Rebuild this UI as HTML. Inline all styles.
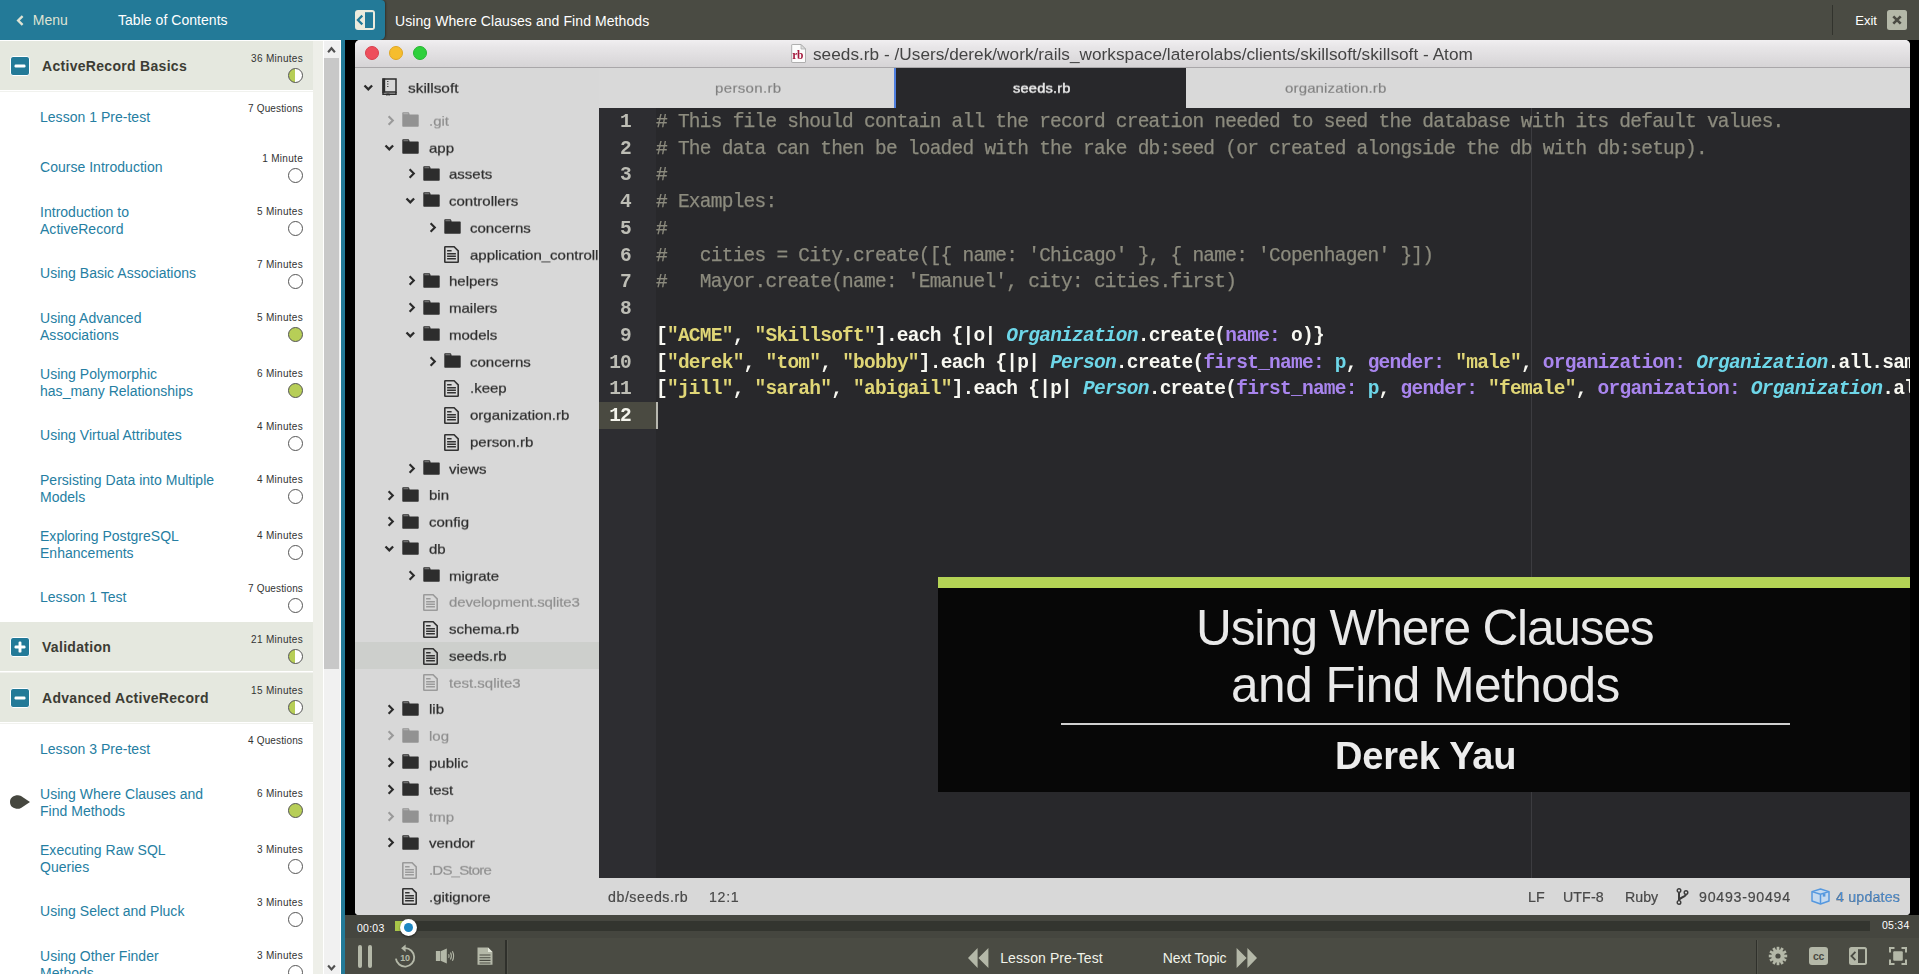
<!DOCTYPE html>
<html><head><meta charset="utf-8"><title>Using Where Clauses and Find Methods</title>
<style>
html,body{margin:0;padding:0;overflow:hidden;}
body{width:1919px;height:974px;overflow:hidden;position:relative;background:#4a4b43;font-family:"Liberation Sans",sans-serif;}
div,svg{box-sizing:border-box;}
.abs{position:absolute;}
.it{position:absolute;left:40px;width:200px;font:14px/17px "Liberation Sans",sans-serif;color:#257ea2;letter-spacing:0.02px;}
.mn{position:absolute;right:1616px;font:10px/12px "Liberation Sans",sans-serif;color:#333;letter-spacing:0.3px;white-space:nowrap;}
.ci{position:absolute;left:288px;width:15px;height:15px;border-radius:50%;border:1px solid #555;background:#fff;}
.ci.g{background:#b7ce57;}
.ci.h{background:linear-gradient(90deg,#b7ce57 0,#b7ce57 50%,#fff 50%,#fff 100%);}
.sec{position:absolute;left:0;width:313px;background:#e5e8df;}
.sect{position:absolute;left:42px;font:bold 14px/16px "Liberation Sans",sans-serif;color:#3c3c34;letter-spacing:0.3px;white-space:nowrap;}
.tv,.code,.ln,.sb,.gs{will-change:transform;}
.tv{transform:scaleY(0.89);transform-origin:50% 62%;}
.tv{position:absolute;font:15px/18px "Liberation Sans",sans-serif;color:#2e2e2e;white-space:nowrap;-webkit-text-stroke:0.25px #2e2e2e;}
.tv.dim{color:#8e8e8e;-webkit-text-stroke:0.2px #8e8e8e;}
.code{position:absolute;font:19.5px/20px "Liberation Mono",monospace;letter-spacing:-0.755px;white-space:pre;color:#f8f8f2;}
.ln{position:absolute;font:bold 19.5px/20px "Liberation Mono",monospace;letter-spacing:-0.78px;white-space:pre;color:#bdbdb5;text-align:right;width:40px;left:-8px;}
.c{color:#8c8b7e;-webkit-text-stroke:0.25px #8c8b7e;} .s{color:#e0d676;} .k{color:#a985ee;} .t{color:#6dd6e8;font-style:italic;} .p{color:#6dd6e8;}
.sb{position:absolute;font:14.2px/18px "Liberation Sans",sans-serif;color:#444;white-space:nowrap;-webkit-text-stroke:0.2px #444;}
</style></head><body>

<div class="abs" style="left:0;top:0;width:1919px;height:40px;background:#4a4b43;"></div>
<div class="abs" style="left:0;top:0;width:385px;height:40px;background:#237a98;border-radius:0 4px 5px 0;box-shadow:1px 0 2px rgba(0,0,0,0.35);"></div>
<svg class="abs" style="left:14px;top:12px" width="14" height="16" viewBox="0 0 14 16"><polyline points="8.6,4.2 4.2,8.5 8.6,12.8" fill="none" stroke="#dfe3d3" stroke-width="2.4" stroke-linecap="butt" stroke-linejoin="miter"/></svg>
<div style="position:absolute;left:32.80px;top:12.95px;font:normal 14px/1 'Liberation Sans',sans-serif;color:#dfe3d3;letter-spacing:0px;white-space:pre;">Menu</div>
<div style="position:absolute;left:118.00px;top:12.95px;font:normal 14px/1 'Liberation Sans',sans-serif;color:#fff;letter-spacing:0.04px;white-space:pre;">Table of Contents</div>
<svg class="abs" style="left:355px;top:10px" width="20" height="20" viewBox="0 0 20 20"><rect x="0" y="0" width="20" height="20" rx="3" fill="#ecebdd"/><rect x="10" y="2.2" width="8" height="15.8" fill="#237a98"/><polyline points="7.3,5.6 2.9,10 7.3,14.4" fill="none" stroke="#237a98" stroke-width="2.2"/></svg>
<div style="position:absolute;left:395.00px;top:14.15px;font:normal 14px/1 'Liberation Sans',sans-serif;color:#fff;letter-spacing:0.08px;white-space:pre;">Using Where Clauses and Find Methods</div>
<div class="abs" style="left:1832px;top:5px;width:1px;height:30px;background:#32332d;"></div>
<div style="position:absolute;left:1855.30px;top:14.00px;font:normal 13px/1 'Liberation Sans',sans-serif;color:#fff;letter-spacing:0px;white-space:pre;">Exit</div>
<svg class="abs" style="left:1887px;top:10px" width="20" height="20" viewBox="0 0 20 20"><rect width="20" height="20" rx="2.5" fill="#b4b8a8"/><path d="M6.3 6.3 L13.7 13.7 M13.7 6.3 L6.3 13.7" stroke="#4a4b43" stroke-width="2.6" stroke-linecap="butt"/></svg>
<div class="abs" style="left:0;top:40px;width:341px;height:934px;background:#fff;"></div>
<div class="abs" style="left:313px;top:41px;width:10px;height:933px;background:#eeefe9;"></div>
<div class="abs" style="left:324px;top:41px;width:16px;height:933px;background:#f1f1f1;"></div>
<div class="abs" style="left:324px;top:58px;width:15px;height:611px;background:#c8c8c8;"></div>
<svg class="abs" style="left:324px;top:41px" width="16" height="17" viewBox="0 0 16 17"><polyline points="4.1,11.2 7.5,7.2 10.9,11.2" fill="none" stroke="#505050" stroke-width="2.1"/></svg>
<svg class="abs" style="left:324px;top:957px" width="16" height="17" viewBox="0 0 16 17"><polyline points="4.1,8.5 7.5,12.5 10.9,8.5" fill="none" stroke="#505050" stroke-width="2.1"/></svg>
<div class="abs" style="left:341px;top:40px;width:4px;height:934px;background:#237a98;"></div>
<div class="sec" style="top:41px;height:49px;"></div>
<div class="abs" style="left:0;top:91px;width:313px;height:1px;background:#f1f2ee;"></div>
<svg class="abs" style="left:10px;top:56px" width="20" height="20" viewBox="0 0 20 20"><rect x="0.5" y="0.5" width="19" height="19" rx="2.5" fill="#237a98" stroke="#fff" stroke-width="1"/><rect x="4.5" y="8.6" width="11" height="2.9" rx="1.2" fill="#fff"/></svg>
<div class="sect" style="top:58px">ActiveRecord Basics</div>
<div class="mn" style="top:53px">36 Minutes</div>
<div class="ci h" style="top:68px"></div>
<div class="it" style="top:108.6px">Lesson 1 Pre-test</div>
<div class="mn" style="top:103px;letter-spacing:0.14px;">7 Questions</div>
<div class="it" style="top:158.6px">Course Introduction</div>
<div class="mn" style="top:153px;">1 Minute</div>
<div class="ci" style="top:168px"></div>
<div class="it" style="top:203.6px">Introduction to<br>ActiveRecord</div>
<div class="mn" style="top:206px;">5 Minutes</div>
<div class="ci" style="top:221px"></div>
<div class="it" style="top:264.6px">Using Basic Associations</div>
<div class="mn" style="top:259px;">7 Minutes</div>
<div class="ci" style="top:274px"></div>
<div class="it" style="top:309.6px">Using Advanced<br>Associations</div>
<div class="mn" style="top:312px;">5 Minutes</div>
<div class="ci g" style="top:327px"></div>
<div class="it" style="top:365.6px">Using Polymorphic<br>has_many Relationships</div>
<div class="mn" style="top:368px;">6 Minutes</div>
<div class="ci g" style="top:383px"></div>
<div class="it" style="top:426.6px">Using Virtual Attributes</div>
<div class="mn" style="top:421px;">4 Minutes</div>
<div class="ci" style="top:436px"></div>
<div class="it" style="top:471.6px">Persisting Data into Multiple<br>Models</div>
<div class="mn" style="top:474px;">4 Minutes</div>
<div class="ci" style="top:489px"></div>
<div class="it" style="top:527.6px">Exploring PostgreSQL<br>Enhancements</div>
<div class="mn" style="top:530px;">4 Minutes</div>
<div class="ci" style="top:545px"></div>
<div class="it" style="top:588.6px">Lesson 1 Test</div>
<div class="mn" style="top:583px;letter-spacing:0.14px;">7 Questions</div>
<div class="ci" style="top:598px"></div>
<div class="sec" style="top:622px;height:49px;"></div>
<div class="abs" style="left:0;top:672px;width:313px;height:1px;background:#f1f2ee;"></div>
<svg class="abs" style="left:10px;top:637px" width="20" height="20" viewBox="0 0 20 20"><rect x="0.5" y="0.5" width="19" height="19" rx="2.5" fill="#237a98" stroke="#fff" stroke-width="1"/><rect x="4.5" y="8.6" width="11" height="2.9" rx="1.2" fill="#fff"/><rect x="8.55" y="4.6" width="2.9" height="11" rx="1.2" fill="#fff"/></svg>
<div class="sect" style="top:639px">Validation</div>
<div class="mn" style="top:634px">21 Minutes</div>
<div class="ci h" style="top:649px"></div>
<div class="sec" style="top:673px;height:49px;"></div>
<div class="abs" style="left:0;top:723px;width:313px;height:1px;background:#f1f2ee;"></div>
<svg class="abs" style="left:10px;top:688px" width="20" height="20" viewBox="0 0 20 20"><rect x="0.5" y="0.5" width="19" height="19" rx="2.5" fill="#237a98" stroke="#fff" stroke-width="1"/><rect x="4.5" y="8.6" width="11" height="2.9" rx="1.2" fill="#fff"/></svg>
<div class="sect" style="top:690px">Advanced ActiveRecord</div>
<div class="mn" style="top:685px">15 Minutes</div>
<div class="ci h" style="top:700px"></div>
<div class="it" style="top:740.6px">Lesson 3 Pre-test</div>
<div class="mn" style="top:735px;letter-spacing:0.14px;">4 Questions</div>
<div class="it" style="top:785.6px">Using Where Clauses and<br>Find Methods</div>
<div class="mn" style="top:788px;">6 Minutes</div>
<div class="ci g" style="top:803px"></div>
<div class="it" style="top:841.6px">Executing Raw SQL<br>Queries</div>
<div class="mn" style="top:844px;">3 Minutes</div>
<div class="ci" style="top:859px"></div>
<div class="it" style="top:902.6px">Using Select and Pluck</div>
<div class="mn" style="top:897px;">3 Minutes</div>
<div class="ci" style="top:912px"></div>
<div class="it" style="top:947.6px">Using Other Finder<br>Methods</div>
<div class="mn" style="top:950px;">3 Minutes</div>
<div class="ci" style="top:965px"></div>
<svg class="abs" style="left:9px;top:794px" width="22" height="16" viewBox="0 0 22 16"><path d="M1 8 C1 3.5 4.5 1.2 9 1.2 C11 1.2 12 2 13.5 3 L21 8 L13.5 13 C12 14 11 14.8 9 14.8 C4.5 14.8 1 12.5 1 8 Z" fill="#46473f"/></svg>
<div class="abs" style="left:345px;top:40px;width:1574px;height:875px;background:#000;"></div>
<div id="win" class="abs" style="left:355px;top:40px;width:1555px;height:875px;border-radius:5px 5px 4px 4px;overflow:hidden;background:#d8d8d8;filter:blur(0.45px);">
<div class="abs" style="left:0;top:0;width:1555px;height:27px;background:linear-gradient(#f1eff1 0%,#e8e6e8 25%,#d6d4d6 100%);"></div>
<div class="abs" style="left:0;top:27px;width:1555px;height:1px;background:#a9a7a9;"></div>
<div class="abs" style="left:9.7px;top:5.900000000000003px;width:14.6px;height:14.6px;border-radius:50%;background:#ee4e5c;border:1px solid #d8404e;"></div>
<div class="abs" style="left:33.7px;top:5.900000000000003px;width:14.6px;height:14.6px;border-radius:50%;background:#f6bd2d;border:1px solid #dfa623;"></div>
<div class="abs" style="left:57.7px;top:5.900000000000003px;width:14.6px;height:14.6px;border-radius:50%;background:#2fd03c;border:1px solid #27b532;"></div>
<svg class="abs gs" style="left:436px;top:3.6000000000000014px" width="15" height="19" viewBox="0 0 15 19"><path d="M1.2 0.5 H10 L14.5 5 V18 Q14.5 18.5 14 18.5 H1.2 Q0.7 18.5 0.7 18 V1 Q0.7 0.5 1.2 0.5 Z" fill="#fcfcfc" stroke="#a8a8a8" stroke-width="0.9"/><path d="M10 0.5 V5 H14.5 Z" fill="#dedede" stroke="#a8a8a8" stroke-width="0.7"/><text x="1.2" y="15.2" font-family="Liberation Serif" font-weight="bold" font-size="11.5" letter-spacing="-0.4" fill="#a3173b">rb</text></svg>
<div style="position:absolute;left:457.80px;top:6.04px;font:normal 17.2px/1 'Liberation Sans',sans-serif;color:#444;letter-spacing:0.03px;white-space:pre;" class="gs">seeds.rb - /Users/derek/work/rails_workspace/laterolabs/clients/skillsoft/skillsoft - Atom</div>
<div class="abs" style="left:0;top:28px;width:244px;height:847px;background:#d8d8d8;"></div>
<div class="abs" style="left:0;top:602.4px;width:244px;height:26.8px;background:#cdcfcc;"></div>
<svg class="abs" style="left:8px;top:44.2px" width="11" height="8" viewBox="0 0 11 8"><polyline points="1.5,1.5 5.3,5.3 9.1,1.5" fill="none" stroke="#2b2b2b" stroke-width="2.3"/></svg>
<svg class="abs" style="left:26.5px;top:38px" width="15" height="18" viewBox="0 0 15 18"><path d="M1 1 H14 V14 H1 Z" fill="none" stroke="#2d2d2d" stroke-width="1.5"/><path d="M1 14 V16.3 H14 V14" fill="none" stroke="#2d2d2d" stroke-width="1.5"/><rect x="0.5" y="0.5" width="2.7" height="14" fill="#2d2d2d"/><path d="M4.5 15.5 H7.5 V18 L6 17 L4.5 18 Z" fill="#2d2d2d"/><path d="M5.2 3.5 H6.4 M5.2 6 H6.4 M5.2 8.5 H6.4" stroke="#2d2d2d" stroke-width="1"/></svg>
<div class="tv" style="left:52.80000000000001px;top:38.8px;font-size:15.4px">skillsoft</div>
<svg class="abs" style="left:32.39999999999998px;top:74.9px" width="8" height="11" viewBox="0 0 8 11"><polyline points="1.6,1.3 5.8,5.5 1.6,9.7" fill="none" stroke="#9a9a9a" stroke-width="2.1"/></svg>
<svg class="abs" style="left:47.39999999999998px;top:72.2px" width="17" height="15" viewBox="0 0 17 15"><path d="M0.3 1 Q0.3 0.3 1 0.3 H6.3 Q7 0.3 7.2 1 L7.6 2.4 H16 Q16.7 2.4 16.7 3.1 V14 Q16.7 14.7 16 14.7 H1 Q0.3 14.7 0.3 14 Z" fill="#929292"/><rect x="1.4" y="1.3" width="5" height="0.9" fill="#d8d8d8" opacity="0.55"/></svg>
<div class="tv dim" style="left:73.6px;top:71.7px;">.git</div>
<svg class="abs" style="left:28.899999999999977px;top:103.75999999999999px" width="11" height="8" viewBox="0 0 11 8"><polyline points="1.5,1.5 5.3,5.3 9.1,1.5" fill="none" stroke="#2b2b2b" stroke-width="2.3"/></svg>
<svg class="abs" style="left:47.39999999999998px;top:98.96px" width="17" height="15" viewBox="0 0 17 15"><path d="M0.3 1 Q0.3 0.3 1 0.3 H6.3 Q7 0.3 7.2 1 L7.6 2.4 H16 Q16.7 2.4 16.7 3.1 V14 Q16.7 14.7 16 14.7 H1 Q0.3 14.7 0.3 14 Z" fill="#2d2d2d"/><rect x="1.4" y="1.3" width="5" height="0.9" fill="#d8d8d8" opacity="0.55"/></svg>
<div class="tv" style="left:73.6px;top:98.5px;">app</div>
<svg class="abs" style="left:53.0px;top:128.42000000000002px" width="8" height="11" viewBox="0 0 8 11"><polyline points="1.6,1.3 5.8,5.5 1.6,9.7" fill="none" stroke="#2b2b2b" stroke-width="2.1"/></svg>
<svg class="abs" style="left:68.0px;top:125.72000000000001px" width="17" height="15" viewBox="0 0 17 15"><path d="M0.3 1 Q0.3 0.3 1 0.3 H6.3 Q7 0.3 7.2 1 L7.6 2.4 H16 Q16.7 2.4 16.7 3.1 V14 Q16.7 14.7 16 14.7 H1 Q0.3 14.7 0.3 14 Z" fill="#2d2d2d"/><rect x="1.4" y="1.3" width="5" height="0.9" fill="#d8d8d8" opacity="0.55"/></svg>
<div class="tv" style="left:94.2px;top:125.2px;">assets</div>
<svg class="abs" style="left:49.5px;top:157.28px" width="11" height="8" viewBox="0 0 11 8"><polyline points="1.5,1.5 5.3,5.3 9.1,1.5" fill="none" stroke="#2b2b2b" stroke-width="2.3"/></svg>
<svg class="abs" style="left:68.0px;top:152.48px" width="17" height="15" viewBox="0 0 17 15"><path d="M0.3 1 Q0.3 0.3 1 0.3 H6.3 Q7 0.3 7.2 1 L7.6 2.4 H16 Q16.7 2.4 16.7 3.1 V14 Q16.7 14.7 16 14.7 H1 Q0.3 14.7 0.3 14 Z" fill="#2d2d2d"/><rect x="1.4" y="1.3" width="5" height="0.9" fill="#d8d8d8" opacity="0.55"/></svg>
<div class="tv" style="left:94.2px;top:152.0px;">controllers</div>
<svg class="abs" style="left:73.59999999999997px;top:181.94000000000003px" width="8" height="11" viewBox="0 0 8 11"><polyline points="1.6,1.3 5.8,5.5 1.6,9.7" fill="none" stroke="#2b2b2b" stroke-width="2.1"/></svg>
<svg class="abs" style="left:88.59999999999997px;top:179.24px" width="17" height="15" viewBox="0 0 17 15"><path d="M0.3 1 Q0.3 0.3 1 0.3 H6.3 Q7 0.3 7.2 1 L7.6 2.4 H16 Q16.7 2.4 16.7 3.1 V14 Q16.7 14.7 16 14.7 H1 Q0.3 14.7 0.3 14 Z" fill="#2d2d2d"/><rect x="1.4" y="1.3" width="5" height="0.9" fill="#d8d8d8" opacity="0.55"/></svg>
<div class="tv" style="left:114.8px;top:178.7px;">concerns</div>
<svg class="abs" style="left:88.59999999999997px;top:206.20000000000002px" width="15" height="17" viewBox="0 0 15 17"><path d="M1.3 0.8 H10.1 L14.2 4.9 V15.7 Q14.2 16.2 13.7 16.2 H1.3 Q0.8 16.2 0.8 15.7 V1.3 Q0.8 0.8 1.3 0.8 Z" fill="none" stroke="#333" stroke-width="1.6"/><path d="M3.1 7.7 H11.9 M3.1 10.2 H11.9 M3.1 12.7 H11.9 M3.1 4.7 H7.6" stroke="#333" stroke-width="1.35"/></svg>
<div class="tv" style="left:114.8px;top:205.5px;">application_controll</div>
<svg class="abs" style="left:53.0px;top:235.46px" width="8" height="11" viewBox="0 0 8 11"><polyline points="1.6,1.3 5.8,5.5 1.6,9.7" fill="none" stroke="#2b2b2b" stroke-width="2.1"/></svg>
<svg class="abs" style="left:68.0px;top:232.76px" width="17" height="15" viewBox="0 0 17 15"><path d="M0.3 1 Q0.3 0.3 1 0.3 H6.3 Q7 0.3 7.2 1 L7.6 2.4 H16 Q16.7 2.4 16.7 3.1 V14 Q16.7 14.7 16 14.7 H1 Q0.3 14.7 0.3 14 Z" fill="#2d2d2d"/><rect x="1.4" y="1.3" width="5" height="0.9" fill="#d8d8d8" opacity="0.55"/></svg>
<div class="tv" style="left:94.2px;top:232.3px;">helpers</div>
<svg class="abs" style="left:53.0px;top:262.22px" width="8" height="11" viewBox="0 0 8 11"><polyline points="1.6,1.3 5.8,5.5 1.6,9.7" fill="none" stroke="#2b2b2b" stroke-width="2.1"/></svg>
<svg class="abs" style="left:68.0px;top:259.52000000000004px" width="17" height="15" viewBox="0 0 17 15"><path d="M0.3 1 Q0.3 0.3 1 0.3 H6.3 Q7 0.3 7.2 1 L7.6 2.4 H16 Q16.7 2.4 16.7 3.1 V14 Q16.7 14.7 16 14.7 H1 Q0.3 14.7 0.3 14 Z" fill="#2d2d2d"/><rect x="1.4" y="1.3" width="5" height="0.9" fill="#d8d8d8" opacity="0.55"/></svg>
<div class="tv" style="left:94.2px;top:259.0px;">mailers</div>
<svg class="abs" style="left:49.5px;top:291.08000000000004px" width="11" height="8" viewBox="0 0 11 8"><polyline points="1.5,1.5 5.3,5.3 9.1,1.5" fill="none" stroke="#2b2b2b" stroke-width="2.3"/></svg>
<svg class="abs" style="left:68.0px;top:286.28000000000003px" width="17" height="15" viewBox="0 0 17 15"><path d="M0.3 1 Q0.3 0.3 1 0.3 H6.3 Q7 0.3 7.2 1 L7.6 2.4 H16 Q16.7 2.4 16.7 3.1 V14 Q16.7 14.7 16 14.7 H1 Q0.3 14.7 0.3 14 Z" fill="#2d2d2d"/><rect x="1.4" y="1.3" width="5" height="0.9" fill="#d8d8d8" opacity="0.55"/></svg>
<div class="tv" style="left:94.2px;top:285.8px;">models</div>
<svg class="abs" style="left:73.59999999999997px;top:315.74px" width="8" height="11" viewBox="0 0 8 11"><polyline points="1.6,1.3 5.8,5.5 1.6,9.7" fill="none" stroke="#2b2b2b" stroke-width="2.1"/></svg>
<svg class="abs" style="left:88.59999999999997px;top:313.04px" width="17" height="15" viewBox="0 0 17 15"><path d="M0.3 1 Q0.3 0.3 1 0.3 H6.3 Q7 0.3 7.2 1 L7.6 2.4 H16 Q16.7 2.4 16.7 3.1 V14 Q16.7 14.7 16 14.7 H1 Q0.3 14.7 0.3 14 Z" fill="#2d2d2d"/><rect x="1.4" y="1.3" width="5" height="0.9" fill="#d8d8d8" opacity="0.55"/></svg>
<div class="tv" style="left:114.8px;top:312.5px;">concerns</div>
<svg class="abs" style="left:88.59999999999997px;top:340.0px" width="15" height="17" viewBox="0 0 15 17"><path d="M1.3 0.8 H10.1 L14.2 4.9 V15.7 Q14.2 16.2 13.7 16.2 H1.3 Q0.8 16.2 0.8 15.7 V1.3 Q0.8 0.8 1.3 0.8 Z" fill="none" stroke="#333" stroke-width="1.6"/><path d="M3.1 7.7 H11.9 M3.1 10.2 H11.9 M3.1 12.7 H11.9 M3.1 4.7 H7.6" stroke="#333" stroke-width="1.35"/></svg>
<div class="tv" style="left:114.8px;top:339.3px;">.keep</div>
<svg class="abs" style="left:88.59999999999997px;top:366.76px" width="15" height="17" viewBox="0 0 15 17"><path d="M1.3 0.8 H10.1 L14.2 4.9 V15.7 Q14.2 16.2 13.7 16.2 H1.3 Q0.8 16.2 0.8 15.7 V1.3 Q0.8 0.8 1.3 0.8 Z" fill="none" stroke="#333" stroke-width="1.6"/><path d="M3.1 7.7 H11.9 M3.1 10.2 H11.9 M3.1 12.7 H11.9 M3.1 4.7 H7.6" stroke="#333" stroke-width="1.35"/></svg>
<div class="tv" style="left:114.8px;top:366.1px;">organization.rb</div>
<svg class="abs" style="left:88.59999999999997px;top:393.52px" width="15" height="17" viewBox="0 0 15 17"><path d="M1.3 0.8 H10.1 L14.2 4.9 V15.7 Q14.2 16.2 13.7 16.2 H1.3 Q0.8 16.2 0.8 15.7 V1.3 Q0.8 0.8 1.3 0.8 Z" fill="none" stroke="#333" stroke-width="1.6"/><path d="M3.1 7.7 H11.9 M3.1 10.2 H11.9 M3.1 12.7 H11.9 M3.1 4.7 H7.6" stroke="#333" stroke-width="1.35"/></svg>
<div class="tv" style="left:114.8px;top:392.8px;">person.rb</div>
<svg class="abs" style="left:53.0px;top:422.78px" width="8" height="11" viewBox="0 0 8 11"><polyline points="1.6,1.3 5.8,5.5 1.6,9.7" fill="none" stroke="#2b2b2b" stroke-width="2.1"/></svg>
<svg class="abs" style="left:68.0px;top:420.08px" width="17" height="15" viewBox="0 0 17 15"><path d="M0.3 1 Q0.3 0.3 1 0.3 H6.3 Q7 0.3 7.2 1 L7.6 2.4 H16 Q16.7 2.4 16.7 3.1 V14 Q16.7 14.7 16 14.7 H1 Q0.3 14.7 0.3 14 Z" fill="#2d2d2d"/><rect x="1.4" y="1.3" width="5" height="0.9" fill="#d8d8d8" opacity="0.55"/></svg>
<div class="tv" style="left:94.2px;top:419.6px;">views</div>
<svg class="abs" style="left:32.39999999999998px;top:449.54px" width="8" height="11" viewBox="0 0 8 11"><polyline points="1.6,1.3 5.8,5.5 1.6,9.7" fill="none" stroke="#2b2b2b" stroke-width="2.1"/></svg>
<svg class="abs" style="left:47.39999999999998px;top:446.84000000000003px" width="17" height="15" viewBox="0 0 17 15"><path d="M0.3 1 Q0.3 0.3 1 0.3 H6.3 Q7 0.3 7.2 1 L7.6 2.4 H16 Q16.7 2.4 16.7 3.1 V14 Q16.7 14.7 16 14.7 H1 Q0.3 14.7 0.3 14 Z" fill="#2d2d2d"/><rect x="1.4" y="1.3" width="5" height="0.9" fill="#d8d8d8" opacity="0.55"/></svg>
<div class="tv" style="left:73.6px;top:446.3px;">bin</div>
<svg class="abs" style="left:32.39999999999998px;top:476.30000000000007px" width="8" height="11" viewBox="0 0 8 11"><polyline points="1.6,1.3 5.8,5.5 1.6,9.7" fill="none" stroke="#2b2b2b" stroke-width="2.1"/></svg>
<svg class="abs" style="left:47.39999999999998px;top:473.6000000000001px" width="17" height="15" viewBox="0 0 17 15"><path d="M0.3 1 Q0.3 0.3 1 0.3 H6.3 Q7 0.3 7.2 1 L7.6 2.4 H16 Q16.7 2.4 16.7 3.1 V14 Q16.7 14.7 16 14.7 H1 Q0.3 14.7 0.3 14 Z" fill="#2d2d2d"/><rect x="1.4" y="1.3" width="5" height="0.9" fill="#d8d8d8" opacity="0.55"/></svg>
<div class="tv" style="left:73.6px;top:473.1px;">config</div>
<svg class="abs" style="left:28.899999999999977px;top:505.1600000000001px" width="11" height="8" viewBox="0 0 11 8"><polyline points="1.5,1.5 5.3,5.3 9.1,1.5" fill="none" stroke="#2b2b2b" stroke-width="2.3"/></svg>
<svg class="abs" style="left:47.39999999999998px;top:500.36000000000007px" width="17" height="15" viewBox="0 0 17 15"><path d="M0.3 1 Q0.3 0.3 1 0.3 H6.3 Q7 0.3 7.2 1 L7.6 2.4 H16 Q16.7 2.4 16.7 3.1 V14 Q16.7 14.7 16 14.7 H1 Q0.3 14.7 0.3 14 Z" fill="#2d2d2d"/><rect x="1.4" y="1.3" width="5" height="0.9" fill="#d8d8d8" opacity="0.55"/></svg>
<div class="tv" style="left:73.6px;top:499.9px;">db</div>
<svg class="abs" style="left:53.0px;top:529.82px" width="8" height="11" viewBox="0 0 8 11"><polyline points="1.6,1.3 5.8,5.5 1.6,9.7" fill="none" stroke="#2b2b2b" stroke-width="2.1"/></svg>
<svg class="abs" style="left:68.0px;top:527.1200000000001px" width="17" height="15" viewBox="0 0 17 15"><path d="M0.3 1 Q0.3 0.3 1 0.3 H6.3 Q7 0.3 7.2 1 L7.6 2.4 H16 Q16.7 2.4 16.7 3.1 V14 Q16.7 14.7 16 14.7 H1 Q0.3 14.7 0.3 14 Z" fill="#2d2d2d"/><rect x="1.4" y="1.3" width="5" height="0.9" fill="#d8d8d8" opacity="0.55"/></svg>
<div class="tv" style="left:94.2px;top:526.6px;">migrate</div>
<svg class="abs" style="left:68.0px;top:554.08px" width="15" height="17" viewBox="0 0 15 17"><path d="M1.3 0.8 H10.1 L14.2 4.9 V15.7 Q14.2 16.2 13.7 16.2 H1.3 Q0.8 16.2 0.8 15.7 V1.3 Q0.8 0.8 1.3 0.8 Z" fill="none" stroke="#9b9b9b" stroke-width="1.6"/><path d="M3.1 7.7 H11.9 M3.1 10.2 H11.9 M3.1 12.7 H11.9 M3.1 4.7 H7.6" stroke="#9b9b9b" stroke-width="1.35"/></svg>
<div class="tv dim" style="left:94.2px;top:553.4px;letter-spacing:-0.15px;">development.sqlite3</div>
<svg class="abs" style="left:68.0px;top:580.84px" width="15" height="17" viewBox="0 0 15 17"><path d="M1.3 0.8 H10.1 L14.2 4.9 V15.7 Q14.2 16.2 13.7 16.2 H1.3 Q0.8 16.2 0.8 15.7 V1.3 Q0.8 0.8 1.3 0.8 Z" fill="none" stroke="#333" stroke-width="1.6"/><path d="M3.1 7.7 H11.9 M3.1 10.2 H11.9 M3.1 12.7 H11.9 M3.1 4.7 H7.6" stroke="#333" stroke-width="1.35"/></svg>
<div class="tv" style="left:94.2px;top:580.1px;">schema.rb</div>
<svg class="abs" style="left:68.0px;top:607.6px" width="15" height="17" viewBox="0 0 15 17"><path d="M1.3 0.8 H10.1 L14.2 4.9 V15.7 Q14.2 16.2 13.7 16.2 H1.3 Q0.8 16.2 0.8 15.7 V1.3 Q0.8 0.8 1.3 0.8 Z" fill="none" stroke="#333" stroke-width="1.6"/><path d="M3.1 7.7 H11.9 M3.1 10.2 H11.9 M3.1 12.7 H11.9 M3.1 4.7 H7.6" stroke="#333" stroke-width="1.35"/></svg>
<div class="tv" style="left:94.2px;top:606.9px;">seeds.rb</div>
<svg class="abs" style="left:68.0px;top:634.36px" width="15" height="17" viewBox="0 0 15 17"><path d="M1.3 0.8 H10.1 L14.2 4.9 V15.7 Q14.2 16.2 13.7 16.2 H1.3 Q0.8 16.2 0.8 15.7 V1.3 Q0.8 0.8 1.3 0.8 Z" fill="none" stroke="#9b9b9b" stroke-width="1.6"/><path d="M3.1 7.7 H11.9 M3.1 10.2 H11.9 M3.1 12.7 H11.9 M3.1 4.7 H7.6" stroke="#9b9b9b" stroke-width="1.35"/></svg>
<div class="tv dim" style="left:94.2px;top:633.7px;">test.sqlite3</div>
<svg class="abs" style="left:32.39999999999998px;top:663.62px" width="8" height="11" viewBox="0 0 8 11"><polyline points="1.6,1.3 5.8,5.5 1.6,9.7" fill="none" stroke="#2b2b2b" stroke-width="2.1"/></svg>
<svg class="abs" style="left:47.39999999999998px;top:660.9200000000001px" width="17" height="15" viewBox="0 0 17 15"><path d="M0.3 1 Q0.3 0.3 1 0.3 H6.3 Q7 0.3 7.2 1 L7.6 2.4 H16 Q16.7 2.4 16.7 3.1 V14 Q16.7 14.7 16 14.7 H1 Q0.3 14.7 0.3 14 Z" fill="#2d2d2d"/><rect x="1.4" y="1.3" width="5" height="0.9" fill="#d8d8d8" opacity="0.55"/></svg>
<div class="tv" style="left:73.6px;top:660.4px;">lib</div>
<svg class="abs" style="left:32.39999999999998px;top:690.38px" width="8" height="11" viewBox="0 0 8 11"><polyline points="1.6,1.3 5.8,5.5 1.6,9.7" fill="none" stroke="#9a9a9a" stroke-width="2.1"/></svg>
<svg class="abs" style="left:47.39999999999998px;top:687.6800000000001px" width="17" height="15" viewBox="0 0 17 15"><path d="M0.3 1 Q0.3 0.3 1 0.3 H6.3 Q7 0.3 7.2 1 L7.6 2.4 H16 Q16.7 2.4 16.7 3.1 V14 Q16.7 14.7 16 14.7 H1 Q0.3 14.7 0.3 14 Z" fill="#929292"/><rect x="1.4" y="1.3" width="5" height="0.9" fill="#d8d8d8" opacity="0.55"/></svg>
<div class="tv dim" style="left:73.6px;top:687.2px;">log</div>
<svg class="abs" style="left:32.39999999999998px;top:717.14px" width="8" height="11" viewBox="0 0 8 11"><polyline points="1.6,1.3 5.8,5.5 1.6,9.7" fill="none" stroke="#2b2b2b" stroke-width="2.1"/></svg>
<svg class="abs" style="left:47.39999999999998px;top:714.44px" width="17" height="15" viewBox="0 0 17 15"><path d="M0.3 1 Q0.3 0.3 1 0.3 H6.3 Q7 0.3 7.2 1 L7.6 2.4 H16 Q16.7 2.4 16.7 3.1 V14 Q16.7 14.7 16 14.7 H1 Q0.3 14.7 0.3 14 Z" fill="#2d2d2d"/><rect x="1.4" y="1.3" width="5" height="0.9" fill="#d8d8d8" opacity="0.55"/></svg>
<div class="tv" style="left:73.6px;top:713.9px;">public</div>
<svg class="abs" style="left:32.39999999999998px;top:743.9px" width="8" height="11" viewBox="0 0 8 11"><polyline points="1.6,1.3 5.8,5.5 1.6,9.7" fill="none" stroke="#2b2b2b" stroke-width="2.1"/></svg>
<svg class="abs" style="left:47.39999999999998px;top:741.2px" width="17" height="15" viewBox="0 0 17 15"><path d="M0.3 1 Q0.3 0.3 1 0.3 H6.3 Q7 0.3 7.2 1 L7.6 2.4 H16 Q16.7 2.4 16.7 3.1 V14 Q16.7 14.7 16 14.7 H1 Q0.3 14.7 0.3 14 Z" fill="#2d2d2d"/><rect x="1.4" y="1.3" width="5" height="0.9" fill="#d8d8d8" opacity="0.55"/></svg>
<div class="tv" style="left:73.6px;top:740.7px;">test</div>
<svg class="abs" style="left:32.39999999999998px;top:770.66px" width="8" height="11" viewBox="0 0 8 11"><polyline points="1.6,1.3 5.8,5.5 1.6,9.7" fill="none" stroke="#9a9a9a" stroke-width="2.1"/></svg>
<svg class="abs" style="left:47.39999999999998px;top:767.96px" width="17" height="15" viewBox="0 0 17 15"><path d="M0.3 1 Q0.3 0.3 1 0.3 H6.3 Q7 0.3 7.2 1 L7.6 2.4 H16 Q16.7 2.4 16.7 3.1 V14 Q16.7 14.7 16 14.7 H1 Q0.3 14.7 0.3 14 Z" fill="#929292"/><rect x="1.4" y="1.3" width="5" height="0.9" fill="#d8d8d8" opacity="0.55"/></svg>
<div class="tv dim" style="left:73.6px;top:767.5px;">tmp</div>
<svg class="abs" style="left:32.39999999999998px;top:797.4200000000001px" width="8" height="11" viewBox="0 0 8 11"><polyline points="1.6,1.3 5.8,5.5 1.6,9.7" fill="none" stroke="#2b2b2b" stroke-width="2.1"/></svg>
<svg class="abs" style="left:47.39999999999998px;top:794.7200000000001px" width="17" height="15" viewBox="0 0 17 15"><path d="M0.3 1 Q0.3 0.3 1 0.3 H6.3 Q7 0.3 7.2 1 L7.6 2.4 H16 Q16.7 2.4 16.7 3.1 V14 Q16.7 14.7 16 14.7 H1 Q0.3 14.7 0.3 14 Z" fill="#2d2d2d"/><rect x="1.4" y="1.3" width="5" height="0.9" fill="#d8d8d8" opacity="0.55"/></svg>
<div class="tv" style="left:73.6px;top:794.2px;">vendor</div>
<svg class="abs" style="left:47.39999999999998px;top:821.6800000000001px" width="15" height="17" viewBox="0 0 15 17"><path d="M1.3 0.8 H10.1 L14.2 4.9 V15.7 Q14.2 16.2 13.7 16.2 H1.3 Q0.8 16.2 0.8 15.7 V1.3 Q0.8 0.8 1.3 0.8 Z" fill="none" stroke="#9b9b9b" stroke-width="1.6"/><path d="M3.1 7.7 H11.9 M3.1 10.2 H11.9 M3.1 12.7 H11.9 M3.1 4.7 H7.6" stroke="#9b9b9b" stroke-width="1.35"/></svg>
<div class="tv dim" style="left:73.6px;top:821.0px;letter-spacing:-0.8px;">.DS_Store</div>
<svg class="abs" style="left:47.39999999999998px;top:848.44px" width="15" height="17" viewBox="0 0 15 17"><path d="M1.3 0.8 H10.1 L14.2 4.9 V15.7 Q14.2 16.2 13.7 16.2 H1.3 Q0.8 16.2 0.8 15.7 V1.3 Q0.8 0.8 1.3 0.8 Z" fill="none" stroke="#333" stroke-width="1.6"/><path d="M3.1 7.7 H11.9 M3.1 10.2 H11.9 M3.1 12.7 H11.9 M3.1 4.7 H7.6" stroke="#333" stroke-width="1.35"/></svg>
<div class="tv" style="left:73.6px;top:847.7px;">.gitignore</div>
<div class="abs" style="left:244px;top:28px;width:1311px;height:40px;background:#d9d9d9;"></div>
<div class="abs" style="left:539px;top:28px;width:2px;height:40px;background:#4f7fe0;"></div>
<div class="abs" style="left:541px;top:28px;width:290px;height:40px;background:#28282b;"></div>
<div class="tv" style="left:359.5px;top:38.7px;color:#808080;letter-spacing:0.35px;-webkit-text-stroke:0.15px #808080;">person.rb</div>
<div class="tv" style="left:658px;top:38.7px;color:#ececec;font-size:14.6px;letter-spacing:0.2px;-webkit-text-stroke:0.5px #ececec">seeds.rb</div>
<div class="tv" style="left:929.5px;top:38.7px;color:#808080;letter-spacing:0.15px;-webkit-text-stroke:0.15px #808080;">organization.rb</div>
<div class="abs" style="left:244px;top:68px;width:1311px;height:770px;background:#28282b;overflow:hidden;" id="ed">
<div class="abs" style="left:0;top:0;width:57px;height:770px;background:#2d2d31;"></div>
<div class="abs" style="left:0;top:293.5px;width:57px;height:27px;background:#4a4a41;"></div>
<div class="abs" style="left:57px;top:293.5px;width:1.5px;height:27px;background:#b8b8b0;"></div>
<div class="abs" style="left:932px;top:0;width:1px;height:770px;background:#3c3c40;"></div>
<div class="ln" style="top:4.00px;">1</div>
<div class="code" style="left:57px;top:4.00px"><span class="c"># This file should contain all the record creation needed to seed the database with its default values.</span></div>
<div class="ln" style="top:30.73px;">2</div>
<div class="code" style="left:57px;top:30.73px"><span class="c"># The data can then be loaded with the rake db:seed (or created alongside the db with db:setup).</span></div>
<div class="ln" style="top:57.46px;">3</div>
<div class="code" style="left:57px;top:57.46px"><span class="c">#</span></div>
<div class="ln" style="top:84.19px;">4</div>
<div class="code" style="left:57px;top:84.19px"><span class="c"># Examples:</span></div>
<div class="ln" style="top:110.92px;">5</div>
<div class="code" style="left:57px;top:110.92px"><span class="c">#</span></div>
<div class="ln" style="top:137.65px;">6</div>
<div class="code" style="left:57px;top:137.65px"><span class="c">#   cities = City.create([{ name: 'Chicago' }, { name: 'Copenhagen' }])</span></div>
<div class="ln" style="top:164.38px;">7</div>
<div class="code" style="left:57px;top:164.38px"><span class="c">#   Mayor.create(name: 'Emanuel', city: cities.first)</span></div>
<div class="ln" style="top:191.11px;">8</div>
<div class="ln" style="top:217.84px;">9</div>
<div class="code" style="left:57px;top:217.84px"><b>[<span class="s">"ACME"</span>, <span class="s">"Skillsoft"</span>].each {|o| <span class="t">Organization</span>.create(<span class="k">name:</span> o)}</b></div>
<div class="ln" style="top:244.57px;">10</div>
<div class="code" style="left:57px;top:244.57px"><b>[<span class="s">"derek"</span>, <span class="s">"tom"</span>, <span class="s">"bobby"</span>].each {|p| <span class="t">Person</span>.create(<span class="k">first_name:</span> <span class="p">p</span>, <span class="k">gender:</span> <span class="s">"male"</span>, <span class="k">organization:</span> <span class="t">Organization</span>.all.sample)}</b></div>
<div class="ln" style="top:271.30px;">11</div>
<div class="code" style="left:57px;top:271.30px"><b>[<span class="s">"jill"</span>, <span class="s">"sarah"</span>, <span class="s">"abigail"</span>].each {|p| <span class="t">Person</span>.create(<span class="k">first_name:</span> <span class="p">p</span>, <span class="k">gender:</span> <span class="s">"female"</span>, <span class="k">organization:</span> <span class="t">Organization</span>.all.sample)}</b></div>
<div class="ln" style="top:298.03px;color:#f4f4ec;">12</div>
</div>
<div class="abs" style="left:583px;top:537px;width:972px;height:11px;background:#b4d355;"></div>
<div class="abs" style="left:583px;top:548px;width:972px;height:204px;background:#070707;"></div>
<div style="position:absolute;left:841.20px;top:564.01px;font:normal 49.6px/1 'Liberation Sans',sans-serif;color:#e9e9e9;letter-spacing:-1.166px;white-space:pre;" class="gs">Using Where Clauses</div>
<div style="position:absolute;left:875.80px;top:620.51px;font:normal 49.6px/1 'Liberation Sans',sans-serif;color:#e9e9e9;letter-spacing:-0.513px;white-space:pre;" class="gs">and Find Methods</div>
<div class="abs" style="left:705.5px;top:682.8px;width:729px;height:2.6px;background:#cfcfcf;"></div>
<div style="position:absolute;left:979.80px;top:697.23px;font:bold 38px/1 'Liberation Sans',sans-serif;color:#ececec;letter-spacing:-0.21px;white-space:pre;" class="gs">Derek Yau</div>
<div class="abs" style="left:244px;top:838px;width:1311px;height:37px;background:#d8d8d8;"></div>
<div class="sb" style="left:253px;top:847.5px;color:#4a4a4a;letter-spacing:0.55px">db/seeds.rb</div>
<div class="sb" style="left:353.5px;top:847.5px;color:#4a4a4a;letter-spacing:0.7px">12:1</div>
<div class="sb" style="left:1172.5px;top:847.5px;color:#4a4a4a;letter-spacing:0px">LF</div>
<div class="sb" style="left:1208px;top:847.5px;color:#4a4a4a;letter-spacing:0.1px">UTF-8</div>
<div class="sb" style="left:1270px;top:847.5px;color:#4a4a4a;letter-spacing:0px">Ruby</div>
<div class="sb" style="left:1344px;top:847.5px;color:#4a4a4a;letter-spacing:0.75px">90493-90494</div>
<div class="sb" style="left:1481px;top:847.5px;color:#4a90d9;letter-spacing:0.2px">4 updates</div>
<svg class="abs" style="left:1321.4px;top:848.2px" width="13" height="17" viewBox="0 0 13 17"><path d="M3 4 V13 M10 6 C10 9.6 3 8.8 3 12.4" fill="none" stroke="#3c3c3c" stroke-width="2"/><circle cx="3" cy="2.6" r="1.8" fill="#d8d8d8" stroke="#3c3c3c" stroke-width="1.4"/><circle cx="10" cy="4.6" r="1.8" fill="#d8d8d8" stroke="#3c3c3c" stroke-width="1.4"/><circle cx="3" cy="14.4" r="1.8" fill="#d8d8d8" stroke="#3c3c3c" stroke-width="1.4"/></svg>
<svg class="abs" style="left:1456px;top:848px" width="19" height="17" viewBox="0 0 19 17"><path d="M1 3.6 L9.5 1 L18 3.6 V13 L9.5 16 L1 13 Z" fill="#c6daef" stroke="#5598df" stroke-width="1.5" stroke-linejoin="round"/><path d="M1 3.6 L9.5 6.2 L18 3.6 M9.5 6.2 V16" fill="none" stroke="#5598df" stroke-width="1.5" stroke-linejoin="round"/><rect x="11.8" y="5.6" width="2.6" height="3" fill="#5598df"/></svg>
</div>
<div class="abs" style="left:345px;top:915px;width:1574px;height:59px;background:#4a4b43;"></div>
<div class="abs" style="left:345px;top:915px;width:1574px;height:23px;background:#45463f;"></div>
<div class="abs" style="left:395px;top:921px;width:1475px;height:10px;background:#33352f;"></div>
<div class="abs" style="left:395px;top:921px;width:10px;height:10px;background:#a9c648;"></div>
<div class="abs" style="left:400px;top:919px;width:17px;height:17px;border-radius:50%;background:#fff;box-shadow:0 1px 2px rgba(0,0,0,.5);"></div>
<div class="abs" style="left:403.8px;top:922.6px;width:9.4px;height:9.4px;border-radius:50%;background:#1d86c2;"></div>
<div style="position:absolute;left:357.00px;top:923.11px;font:normal 10.5px/1 'Liberation Sans',sans-serif;color:#fff;letter-spacing:0.25px;white-space:pre;">00:03</div>
<div style="position:absolute;left:1882.00px;top:920.11px;font:normal 10.5px/1 'Liberation Sans',sans-serif;color:#fff;letter-spacing:0.25px;white-space:pre;">05:34</div>
<div class="abs" style="left:357.5px;top:945px;width:4.4px;height:22.5px;border-radius:2px;background:#b4b8a8;"></div>
<div class="abs" style="left:367.8px;top:945px;width:4.4px;height:22.5px;border-radius:2px;background:#b4b8a8;"></div>
<svg class="abs" style="left:393px;top:944px" width="24" height="26" viewBox="0 0 24 26"><path d="M12 4.2 A9.2 9.2 0 1 1 2.9 14.6" fill="none" stroke="#b4b8a8" stroke-width="1.85"/><path d="M12.6 0.6 L8.1 4.3 L12.6 8 Z" fill="#b4b8a8"/><text x="12" y="17" text-anchor="middle" font-family="Liberation Sans" font-weight="bold" font-size="9" letter-spacing="-0.3" fill="#b4b8a8">10</text></svg>
<svg class="abs" style="left:435px;top:947px" width="21" height="18" viewBox="0 0 21 18"><rect x="0.9" y="4" width="4.2" height="10" fill="#b4b8a8"/><path d="M5.6 4.3 L11.8 1.6 V16.6 L5.6 13.7 Z" fill="#b4b8a8"/><path d="M13.6 7.2 Q14.6 9 13.6 10.8 M15.5 5.6 Q17.3 9 15.5 12.4 M17.4 4.2 Q19.8 9 17.4 13.8" fill="none" stroke="#b4b8a8" stroke-width="1.1"/></svg>
<svg class="abs" style="left:477px;top:947px" width="16" height="18" viewBox="0 0 16 18"><path d="M0.5 0.5 H11 L15.5 5 V17.8 H0.5 Z" fill="#b4b8a8"/><path d="M11 0.5 V5 H15.5 Z" fill="#e4e7da"/><path d="M2.5 8 H13.5 M2.5 10.7 H13.5 M2.5 13.4 H13.5 M2.5 16 H13.5" stroke="#4a4b43" stroke-width="1.1"/></svg>
<div class="abs" style="left:505px;top:940px;width:1.5px;height:34px;background:#2f302b;"></div>
<div class="abs" style="left:506.5px;top:940px;width:1px;height:34px;background:#54554d;"></div>
<svg class="abs" style="left:967px;top:947px" width="22" height="22" viewBox="0 0 22 22"><path d="M10.6 1 L1 11 L10.6 21 Z M21.4 1 L11.4 11 L21.4 21 Z" fill="#b4b8a8"/></svg>
<div style="position:absolute;left:1000.20px;top:951.15px;font:normal 14px/1 'Liberation Sans',sans-serif;color:#f1f3ea;letter-spacing:0.1px;white-space:pre;">Lesson Pre-Test</div>
<div style="position:absolute;left:1162.80px;top:951.15px;font:normal 14px/1 'Liberation Sans',sans-serif;color:#f1f3ea;letter-spacing:-0.15px;white-space:pre;">Next Topic</div>
<svg class="abs" style="left:1236px;top:947px" width="22" height="22" viewBox="0 0 22 22"><path d="M0.6 1 L10.6 11 L0.6 21 Z M11.4 1 L21 11 L11.4 21 Z" fill="#b4b8a8"/></svg>
<div class="abs" style="left:1755.5px;top:940px;width:1.5px;height:34px;background:#2f302b;"></div>
<div class="abs" style="left:1757px;top:940px;width:1px;height:34px;background:#54554d;"></div>
<svg class="abs" style="left:1768px;top:946px" width="20" height="20" viewBox="-10 -10 20 20"><circle r="6.6" fill="#b4b8a8"/><rect x="-1.35" y="-9.2" width="2.7" height="4" fill="#b4b8a8" transform="rotate(0)"/><rect x="-1.35" y="-9.2" width="2.7" height="4" fill="#b4b8a8" transform="rotate(30)"/><rect x="-1.35" y="-9.2" width="2.7" height="4" fill="#b4b8a8" transform="rotate(60)"/><rect x="-1.35" y="-9.2" width="2.7" height="4" fill="#b4b8a8" transform="rotate(90)"/><rect x="-1.35" y="-9.2" width="2.7" height="4" fill="#b4b8a8" transform="rotate(120)"/><rect x="-1.35" y="-9.2" width="2.7" height="4" fill="#b4b8a8" transform="rotate(150)"/><rect x="-1.35" y="-9.2" width="2.7" height="4" fill="#b4b8a8" transform="rotate(180)"/><rect x="-1.35" y="-9.2" width="2.7" height="4" fill="#b4b8a8" transform="rotate(210)"/><rect x="-1.35" y="-9.2" width="2.7" height="4" fill="#b4b8a8" transform="rotate(240)"/><rect x="-1.35" y="-9.2" width="2.7" height="4" fill="#b4b8a8" transform="rotate(270)"/><rect x="-1.35" y="-9.2" width="2.7" height="4" fill="#b4b8a8" transform="rotate(300)"/><rect x="-1.35" y="-9.2" width="2.7" height="4" fill="#b4b8a8" transform="rotate(330)"/><circle r="2.6" fill="#4a4b43"/></svg>
<svg class="abs" style="left:1809px;top:947px" width="19" height="18" viewBox="0 0 19 18"><rect width="19" height="18" rx="3" fill="#b4b8a8"/><text x="9.5" y="13" text-anchor="middle" font-family="Liberation Sans" font-weight="bold" font-size="10.5" fill="#4a4b43" letter-spacing="-0.3">cc</text></svg>
<svg class="abs" style="left:1849px;top:947px" width="18" height="18" viewBox="0 0 18 18"><rect width="18" height="18" rx="2.5" fill="#b4b8a8"/><rect x="9" y="2.2" width="7" height="13.8" fill="#4a4b43"/><polyline points="6.4,4.9 2.4,9 6.4,13.1" fill="none" stroke="#4a4b43" stroke-width="1.8"/></svg>
<svg class="abs" style="left:1889px;top:947px" width="18" height="18" viewBox="0 0 18 18"><path d="M1 5.5 V1 H5.5 M12.5 1 H17 V5.5 M17 12.5 V17 H12.5 M5.5 17 H1 V12.5" fill="none" stroke="#b4b8a8" stroke-width="2"/><rect x="4.2" y="4.2" width="9.6" height="9.6" rx="1" fill="#b4b8a8"/></svg>
</body></html>
